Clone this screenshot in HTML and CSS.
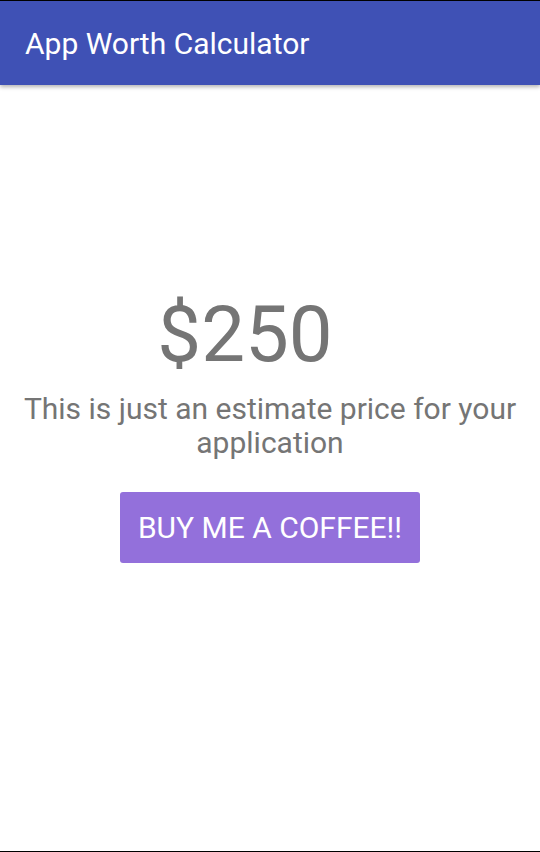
FILE: index.html
```html
<!DOCTYPE html>
<html>
<head>
    <meta charset="utf-8">
    <link rel="stylesheet" href="styles.css">
</head>
<body>
    <div class="screen">
        <div class="app-bar">
            <div class="title">App Worth Calculator</div>
        </div>

        <div class="content">
            <div class="price">$250</div>
            <div class="note">This is just an estimate price for your application</div>
            <button class="btn-coffee">BUY ME A COFFEE!!</button>
        </div>
    </div>
</body>
</html>
```

FILE: styles.css
```css
html, body {
    margin: 0;
    padding: 0;
    background: #000;
}

body {
    font-family: Roboto, "Noto Sans", sans-serif;
}

.screen {
    margin-top: 1px;
    height: 850px;
    background: #fff;
    display: flex;
    flex-direction: column;
}

.app-bar {
    height: 84px;
    background: #3f51b5;
    display: flex;
    align-items: center;
    padding-left: 25px;
    box-shadow: 0 2px 4px rgba(0, 0, 0, 0.3);
    position: relative;
    z-index: 1;
}

.title {
    color: #fff;
    font-size: 30px;
    margin-top: 1px;
}

.content {
    flex: 1;
    display: flex;
    flex-direction: column;
    align-items: center;
    padding-top: 200px;
}

.price {
    font-size: 78px;
    line-height: 100px;
    color: #757575;
    padding-right: 50px;
}

.note {
    margin-top: 7px;
    font-size: 30px;
    line-height: 34px;
    color: #757575;
    text-align: center;
    padding: 0 10px;
}

.btn-coffee {
    margin-top: 32px;
    width: 300px;
    height: 71px;
    border: none;
    border-radius: 3px;
    background: #9370db;
    color: #fff;
    font-family: inherit;
    font-size: 30px;
    padding: 0;
}
```
